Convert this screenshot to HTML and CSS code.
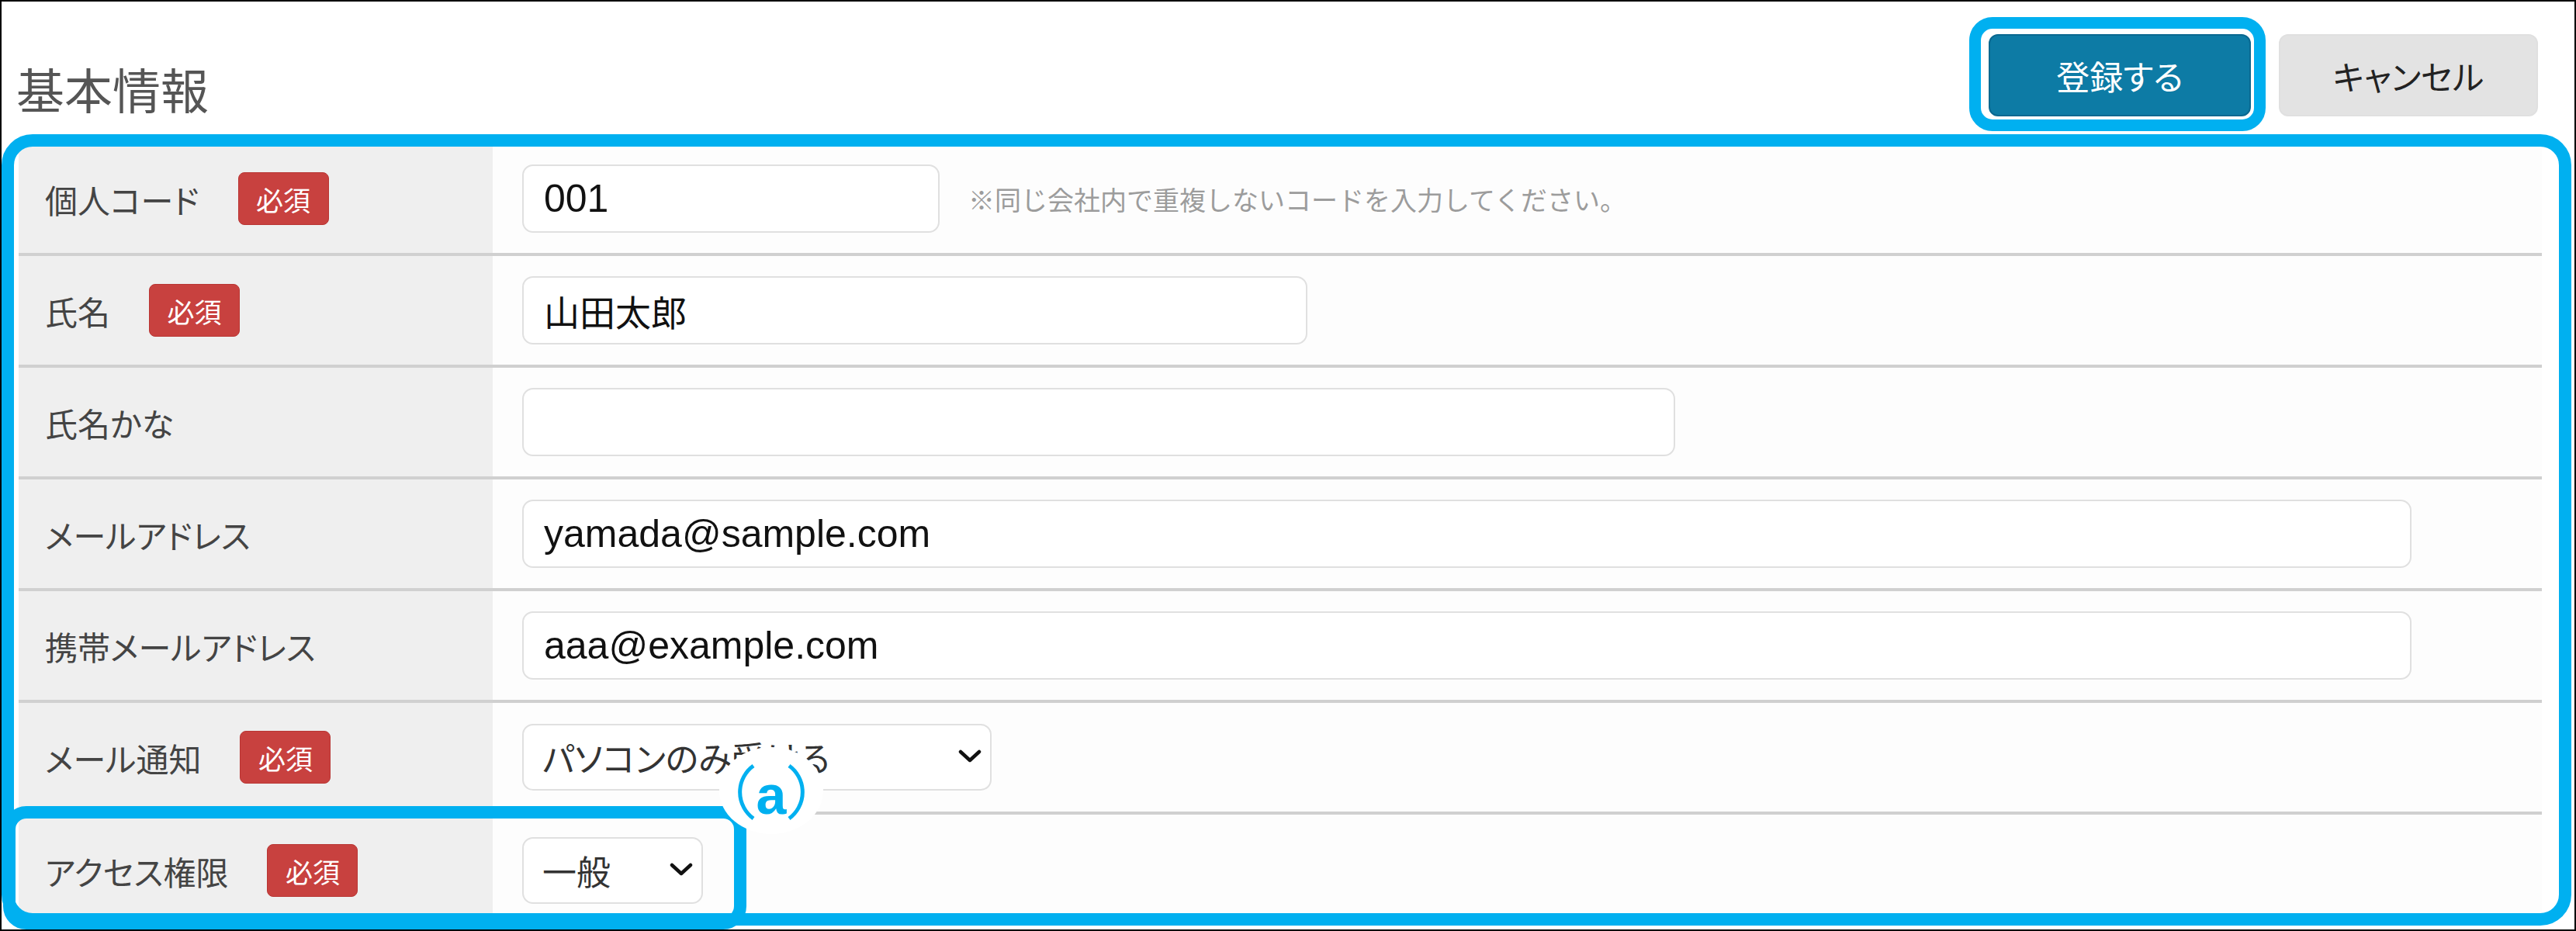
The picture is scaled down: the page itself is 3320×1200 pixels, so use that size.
FILE: index.html
```html
<!DOCTYPE html>
<html lang="ja">
<head>
<meta charset="utf-8">
<meta name="viewport" content="width=device-width, initial-scale=1.0">
<title>基本情報</title>

<link rel="stylesheet" href="styles.css">
</head>

<body>

  <div class="screen">

    <header class="page-head">
      <h1 class="page-title">基本情報</h1>
      <div class="actions">
        <button type="submit" class="btn btn-primary">登録する</button>
        <button type="button" class="btn btn-cancel">キャンセル</button>
      </div>
    </header>

    <div class="info-table">
      <div class="info-row">
        <div class="info-label">個人コード<span class="badge">必須</span></div>
        <div class="info-value">
          <input type="text" class="field field-code" value="001">
          <span class="hint">※同じ会社内で重複しないコードを入力してください。</span>
        </div>
      </div>

      <div class="info-row">
        <div class="info-label">氏名<span class="badge">必須</span></div>
        <div class="info-value">
          <input type="text" class="field field-name field-ja" value="山田太郎">
        </div>
      </div>

      <div class="info-row">
        <div class="info-label">氏名かな</div>
        <div class="info-value">
          <input type="text" class="field field-kana" value="">
        </div>
      </div>

      <div class="info-row">
        <div class="info-label">メールアドレス</div>
        <div class="info-value">
          <input type="text" class="field field-mail" value="yamada@sample.com">
        </div>
      </div>

      <div class="info-row">
        <div class="info-label">携帯メールアドレス</div>
        <div class="info-value">
          <input type="text" class="field field-mail" value="aaa@example.com">
        </div>
      </div>

      <div class="info-row">
        <div class="info-label">メール通知<span class="badge">必須</span></div>
        <div class="info-value">
          <div class="select-wrap select-notify">
            <select class="select">
              <option>パソコンのみ受ける</option>
              <option>携帯のみ受ける</option>
              <option>両方受ける</option>
              <option>受けない</option>
            </select>
            <svg class="chevron" width="30" height="18" viewBox="0 0 30 18"><path d="M3 3 L15 14 L27 3" fill="none" stroke="#111" stroke-width="4.5" stroke-linecap="round" stroke-linejoin="round"/></svg>
          </div>
        </div>
      </div>

      <div class="info-row">
        <div class="info-label">アクセス権限<span class="badge">必須</span></div>
        <div class="info-value">
          <div class="select-wrap select-role">
            <select class="select">
              <option>一般</option>
              <option>管理者</option>
            </select>
            <svg class="chevron" width="30" height="18" viewBox="0 0 30 18"><path d="M3 3 L15 14 L27 3" fill="none" stroke="#111" stroke-width="4.5" stroke-linecap="round" stroke-linejoin="round"/></svg>
          </div>
        </div>
      </div>
    </div>

    <!-- annotation frames drawn over the form -->
    <div class="mark mark-table"></div>
    <div class="mark mark-role"></div>
    <div class="mark mark-submit"></div>
    <svg class="mark-label" width="134" height="112" viewBox="0 0 134 112">
      <ellipse cx="67" cy="56" rx="67" ry="56" fill="#fff"/>
      <path d="M44 24 A42 42 0 0 0 44 92" fill="none" stroke="#00b0f0" stroke-width="5"/>
      <path d="M90 24 A42 42 0 0 1 90 92" fill="none" stroke="#00b0f0" stroke-width="5"/>
      <text x="67" y="86" text-anchor="middle" class="mark-letter">a</text>
    </svg>

  </div>

</body>
</html>
```

FILE: styles.css
```css
html, body {
  margin: 0;
  padding: 0;
  background: #fff;
}

.screen {
  position: relative;
  width: 3320px;
  height: 1200px;
  box-sizing: border-box;
  border: 2px solid #000;
  background: #fff;
  overflow: hidden;
  font-family: "Noto Sans CJK JP", "Noto Sans", sans-serif;
}

/* header */

.page-head {
  display: flex;
  justify-content: space-between;
  align-items: flex-start;
  height: 184px;
  padding: 0 47px 0 19px;
  box-sizing: border-box;
}

.page-title {
  margin: 82px 0 0;
  font-size: 62px;
  line-height: 60px;
  font-weight: normal;
  color: #555;
}

.actions {
  display: flex;
  gap: 36px;
  margin-top: 42px;
}

.btn {
  height: 106px;
  border-radius: 12px;
  font-family: "Noto Sans CJK JP", sans-serif;
  font-size: 43px;
  line-height: 1;
  font-feature-settings: "palt";
  cursor: pointer;
}

.btn-primary {
  width: 338px;
  background: #0d7ba5;
  border: 2px solid #0a6890;
  color: #fff;
}

.btn-cancel {
  width: 334px;
  background: #e3e3e3;
  border: 2px solid #e0e0e0;
  color: #222;
}

/* form table */

.info-table {
  margin: 0 42px 0 22px;
}

.info-row {
  display: grid;
  grid-template-columns: 611px 1fr;
  height: 144px;
  box-sizing: border-box;
  border-bottom: 4px solid #d0d0d0;
}

.info-row:last-child {
  border-bottom: none;
}

.info-label {
  display: flex;
  align-items: center;
  padding-left: 34px;
  background: #efefef;
  font-size: 42px;
  color: #444;
  font-feature-settings: "palt";
}

.badge {
  display: inline-flex;
  align-items: center;
  justify-content: center;
  width: 117px;
  height: 68px;
  margin-left: 50px;
  box-sizing: border-box;
  border-radius: 8px;
  border: 1px solid #b93634;
  background: #c8413f;
  color: #fff;
  font-size: 35px;
  line-height: 1;
}

.info-value {
  display: flex;
  align-items: center;
  gap: 37px;
  padding-left: 38px;
  background: #fdfdfd;
}

.field {
  height: 88px;
  box-sizing: border-box;
  padding: 0 26px;
  border: 2px solid #e0e0e0;
  border-radius: 14px;
  background: #fff;
  font-family: "Liberation Sans", "Noto Sans CJK JP", sans-serif;
  font-size: 50px;
  color: #111;
  outline: none;
}

.field-ja {
  font-family: "Noto Sans CJK JP", sans-serif;
  font-size: 46px;
}

.field-code { width: 538px; }
.field-name { width: 1012px; }
.field-kana { width: 1486px; }
.field-mail { width: 2435px; }

.hint {
  font-size: 34px;
  color: #9c9c9c;
}

.select-wrap {
  position: relative;
}

.select {
  width: 100%;
  height: 86px;
  box-sizing: border-box;
  padding: 0 60px 0 24px;
  border: 2px solid #e0e0e0;
  border-radius: 14px;
  background: #fff;
  font-family: "Noto Sans CJK JP", sans-serif;
  font-size: 44px;
  font-feature-settings: "palt";
  color: #333;
  appearance: none;
  -webkit-appearance: none;
  outline: none;
}

.select-notify { width: 605px; }
.select-role { width: 233px; }

.chevron {
  position: absolute;
  right: 13px;
  top: 33px;
  pointer-events: none;
}

/* annotations */

.mark {
  position: absolute;
  box-sizing: border-box;
  border: 16px solid #00b0f0;
  pointer-events: none;
}

.mark-table {
  left: 0;
  top: 171px;
  width: 3312px;
  height: 1020px;
  border-radius: 40px;
}

.mark-role {
  left: 2px;
  top: 1037px;
  width: 958px;
  height: 159px;
  border-radius: 30px;
}

.mark-submit {
  left: 2536px;
  top: 20px;
  width: 382px;
  height: 147px;
  border-width: 15px;
  border-radius: 30px;
}

.mark-label {
  position: absolute;
  left: 925px;
  top: 961px;
}

.mark-letter {
  font-family: "Liberation Sans", sans-serif;
  font-weight: bold;
  font-size: 70px;
  fill: #00b0f0;
}
```
